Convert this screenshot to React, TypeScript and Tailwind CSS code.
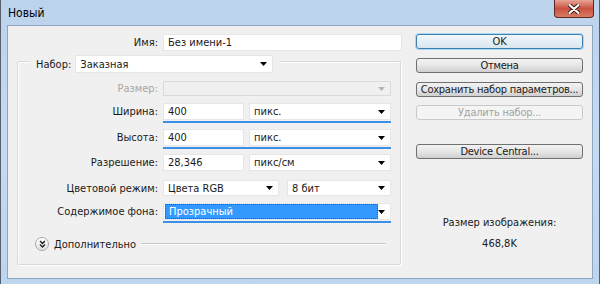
import React from "react";

const font = { fontFamily: '"DejaVu Sans Condensed", "DejaVu Sans", Tahoma, sans-serif' };

function Arrow({ color = "#000" }: { color?: string }) {
    return (
        <svg width="7" height="4" viewBox="0 0 7 4" className="shrink-0">
            <path d="M0 0h7L3.5 4z" fill={color} />
        </svg>
    );
}

type SelectProps = { value?: string; w: string; disabled?: boolean; h?: string };

function Select({ value = "", w, disabled, h = "h-[17px]" }: SelectProps) {
    return (
        <div
            className={`${w} ${h} flex items-center justify-between pl-[4px] pr-[5px] border ${
                disabled ? "bg-[#f0f0f0] border-[#dadada]" : "bg-white border-[#e6e6e6]"
            }`}
        >
            <span className="truncate">{value}</span>
            <Arrow color={disabled ? "#b4b4b4" : "#000"} />
        </div>
    );
}

function Input({ value, w }: { value: string; w: string }) {
    return (
        <div className={`${w} h-[17px] flex items-center pl-[4px] bg-white border border-[#e6e6e6]`}>
            {value}
        </div>
    );
}

function Underline({ w = "w-[228px]" }: { w?: string }) {
    return <div className={`${w} h-[2px] mt-[1px] ml-[145px] bg-[#3b8fe6]`} />;
}

function Button({ label, primary, disabled }: { label: string; primary?: boolean; disabled?: boolean }) {
    return (
        <div
            className={`w-[167px] h-[15px] flex items-center justify-center rounded-[3px] border tracking-[-0.25px] ${
                disabled
                    ? "border-[#c9c9c9] bg-[#f4f4f4] text-[#a3a3a3]"
                    : primary
                    ? "border-[#3c7fb1] bg-gradient-to-b from-[#f2f7fb] to-[#d9e6f0] shadow-[0_0_0_1px_#a8d8f3]"
                    : "border-[#707070] bg-gradient-to-b from-[#f2f2f2] via-[#e6e6e6] to-[#cfcfcf]"
            }`}
        >
            {label}
        </div>
    );
}

function Row({ label, children, gray, className = "" }: { label: string; children: React.ReactNode; gray?: boolean; className?: string }) {
    return (
        <div className={`flex items-center gap-[5px] ${className}`}>
            <div className={`w-[140px] text-right ${gray ? "text-[#a6a6a6]" : ""}`}>{label}</div>
            {children}
        </div>
    );
}

export default function App() {
    return (
        <div
            style={font}
            className="w-[600px] h-[284px] flex flex-col text-[11px] leading-none text-[#1a1a1a] bg-gradient-to-b from-[#bcd3ec] via-[#c6daf0] to-[#bed5ee] border-l border-r border-[#55606c] px-[6px] pb-[5px]"
        >
            <div className="h-[25px] flex items-start justify-between shrink-0">
                <div className="pt-[7px] pl-[1px] text-[12px] text-black">Новый</div>
                <div className="w-[40px] h-[18px] -mr-[1px] rounded-b-[4px] border border-t-0 border-[#5a2a22] bg-gradient-to-b from-[#e8a497] via-[#c9513f] to-[#d97a62] flex items-center justify-center">
                    <svg width="12" height="10" viewBox="0 0 12 10">
                        <path d="M1.5 1l9 8M10.5 1l-9 8" stroke="#3b1a15" strokeWidth="4" strokeLinecap="round" />
                        <path d="M1.5 1l9 8M10.5 1l-9 8" stroke="#ffffff" strokeWidth="2.2" strokeLinecap="round" />
                    </svg>
                </div>
            </div>

            <div className="flex-1 flex bg-[#f0f0f0] border border-[#8ea6c0]">
                <div className="w-[394px] pt-[8px]">
                    <div className="flex items-center h-[17px]">
                        <div className="w-[150px] text-right">Имя:</div>
                        <div className="ml-[5px]">
                            <Input value="Без имени-1" w="w-[239px]" />
                        </div>
                    </div>

                    <div className="ml-[9px] mt-[10px] w-[384px] h-[204px] border border-[#d5d9dd] rounded-[2px] shadow-[inset_1px_1px_0_#ffffff,1px_1px_0_#ffffff]">
                        <div className="-mt-[7px] ml-[12px] w-fit px-[6px] bg-[#f0f0f0] flex items-center gap-[4px]">
                            <span>Набор:</span>
                            <Select value="Заказная" w="w-[198px]" h="h-[18px]" />
                        </div>

                        <Row label="Размер:" gray className="mt-[8px]">
                            <Select w="w-[228px]" h="h-[15px]" disabled />
                        </Row>

                        <Row label="Ширина:" className="mt-[7px]">
                            <Input value="400" w="w-[81px]" />
                            <Select value="пикс." w="w-[142px]" />
                        </Row>
                        <Underline />

                        <Row label="Высота:" className="mt-[6px]">
                            <Input value="400" w="w-[81px]" />
                            <Select value="пикс." w="w-[142px]" />
                        </Row>
                        <Underline />

                        <Row label="Разрешение:" className="mt-[5px]">
                            <Input value="28,346" w="w-[81px]" />
                            <Select value="пикс/см" w="w-[142px]" />
                        </Row>

                        <Row label="Цветовой режим:" className="mt-[9px]">
                            <Select value="Цвета RGB" w="w-[116px]" h="h-[16px]" />
                            <div className="ml-[3px]">
                                <Select value="8 бит" w="w-[104px]" h="h-[16px]" />
                            </div>
                        </Row>

                        <Row label="Содержимое фона:" className="mt-[7px]">
                            <div className="w-[228px] h-[17px] flex items-center justify-between bg-white border border-[#e6e6e6] pr-[5px]">
                                <div className="w-[213px] h-[15px] ml-[1px] bg-[#3399ff] border border-dotted border-[#7a4a22] text-white flex items-center pl-[3px]">
                                    Прозрачный
                                </div>
                                <Arrow />
                            </div>
                        </Row>
                        <Underline />

                        <div className="flex items-center mt-[14px] ml-[17px] pr-[14px]">
                            <div className="w-[14px] h-[14px] rounded-full border border-[#a9a9a9] bg-gradient-to-b from-white to-[#e2e2e2] flex items-center justify-center">
                                <svg width="7" height="8" viewBox="0 0 7 8">
                                    <path d="M1 1l2.5 2.5L6 1M1 4.5l2.5 2.5L6 4.5" stroke="#222" strokeWidth="1.4" fill="none" />
                                </svg>
                            </div>
                            <span className="ml-[5px]">Дополнительно</span>
                            <div className="flex-1 ml-[5px] h-[2px] border-t border-[#c8c8c8] bg-white" />
                        </div>
                    </div>
                </div>

                <div className="ml-[14px] w-[167px] pt-[8px] flex flex-col">
                    <Button label="OK" primary />
                    <div className="mt-[9px]">
                        <Button label="Отмена" />
                    </div>
                    <div className="mt-[9px]">
                        <Button label="Сохранить набор параметров..." />
                    </div>
                    <div className="mt-[8px]">
                        <Button label="Удалить набор..." disabled />
                    </div>
                    <div className="mt-[24px]">
                        <Button label="Device Central..." />
                    </div>
                    <div className="mt-[58px] text-center">Размер изображения:</div>
                    <div className="mt-[10px] text-center">468,8K</div>
                </div>
            </div>
        </div>
    );
}
